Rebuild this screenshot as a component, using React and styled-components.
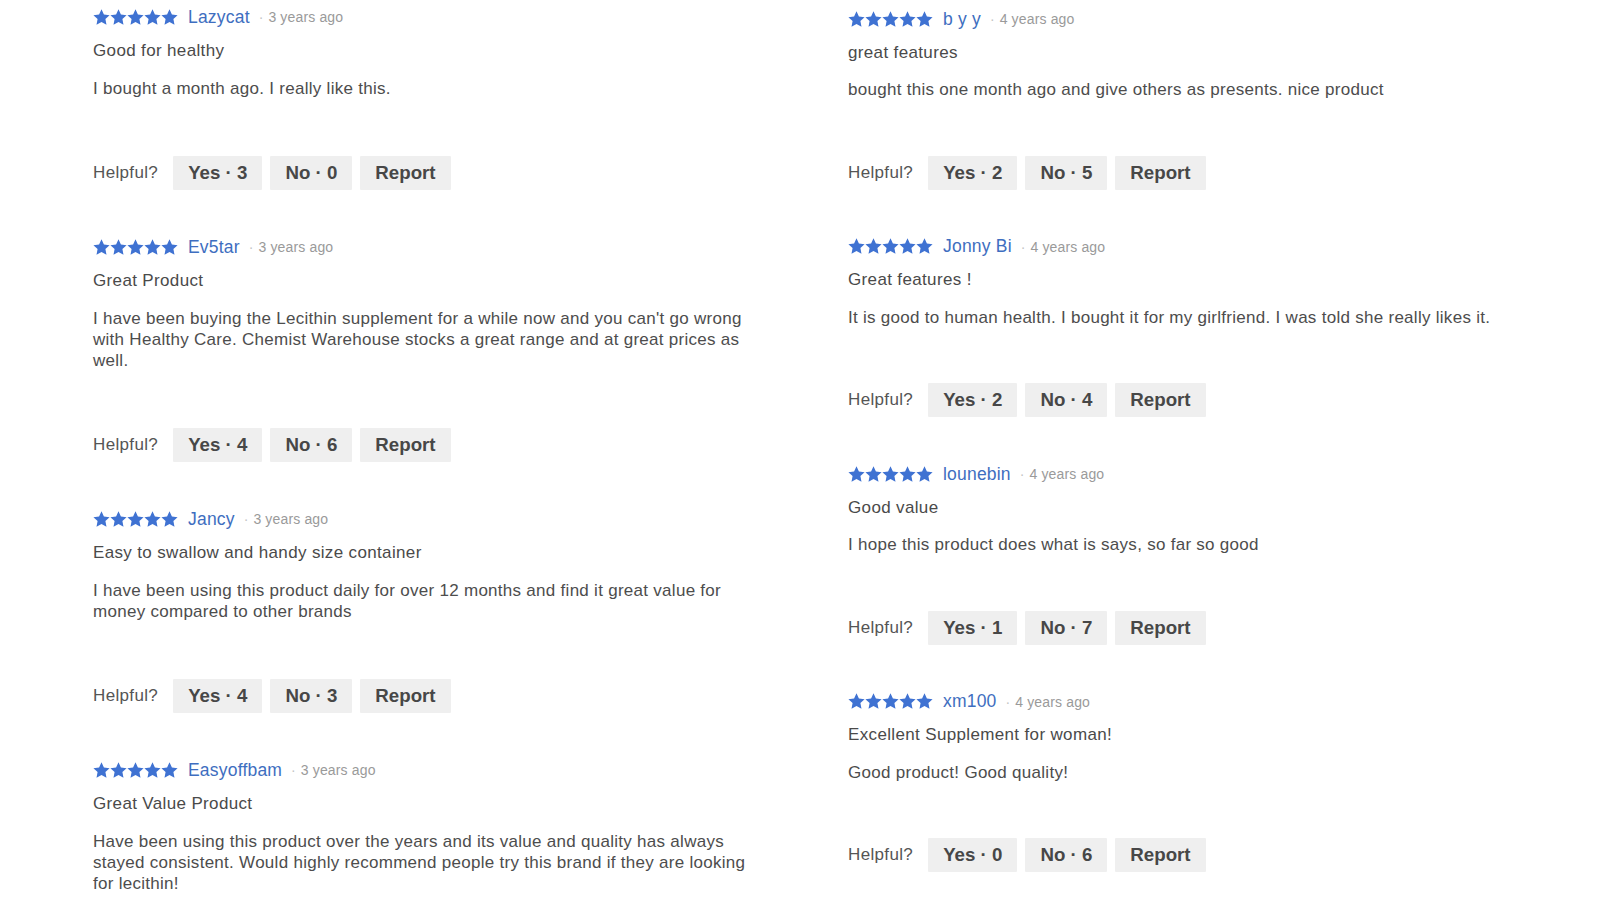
import React from "react";
import styled, { createGlobalStyle } from "styled-components";

const Global = createGlobalStyle`
  html, body { margin: 0; padding: 0; background: #ffffff; }
  body { font-family: "Liberation Sans", Arial, sans-serif; color: #444; }
`;

const Page = styled.div`
  display: grid;
  grid-template-columns: 667px 680px;
  column-gap: 88px;
  padding-left: 93px;
  width: 1600px;
  height: 900px;
  box-sizing: border-box;
  overflow: hidden;
`;

const Column = styled.div`
  display: flex;
  flex-direction: column;
  gap: ${(p) => p.$gap}px;
  padding-top: ${(p) => p.$top}px;
`;

const Review = styled.article`
  display: flex;
  flex-direction: column;
`;

const Header = styled.div`
  display: flex;
  align-items: center;
  height: 20px;
`;

const Stars = styled.div`
  display: flex;
  margin-right: 10px;
`;

const Name = styled.span`
  font-size: 17.5px;
  color: #3e6ec0;
  letter-spacing: 0.2px;
`;

const Dot = styled.span`
  color: #c4c4c4;
  font-size: 14px;
  margin: 0 5px 0 9px;
`;

const Age = styled.span`
  font-size: 14px;
  color: #9a9a9a;
  letter-spacing: 0.15px;
`;

const Title = styled.h3`
  margin: ${(p) => p.$mt}px 0 0;
  font-size: 17px;
  line-height: 20px;
  font-weight: 400;
  color: #4a4a4a;
  letter-spacing: 0.35px;
`;

const Body = styled.p`
  margin: 16.5px 0 0;
  font-size: 17px;
  line-height: 21px;
  color: #4d4d4d;
  letter-spacing: 0.28px;
`;

const Helpful = styled.div`
  display: flex;
  align-items: center;
  margin-top: ${(p) => p.$mt}px;
  height: 34px;
`;

const HelpfulLabel = styled.span`
  font-size: 17px;
  color: #555;
  margin-right: 15px;
  letter-spacing: 0.35px;
`;

const Buttons = styled.div`
  display: flex;
  gap: 8px;
`;

const Btn = styled.button`
  height: 34px;
  padding: 0 15px;
  border: none;
  border-radius: 1px;
  background: #efefef;
  font-family: "Liberation Sans", Arial, sans-serif;
  font-weight: 700;
  font-size: 18.7px;
  color: #474747;
  cursor: pointer;
`;

const Star = () => (
  <svg width="17" height="16.3" viewBox="0 0 24 23">
    <path
      d="M12 0.5L15.41 7.81L23.41 8.79L17.52 14.29L19.05 22.21L12 18.3L4.95 22.21L6.48 14.29L0.59 8.79L8.59 7.81Z"
      fill="#3f72d2"
    />
  </svg>
);

const left = [
  {
    name: "Lazycat",
    age: "3 years ago",
    title: "Good for healthy",
    body: "I bought a month ago. I really like this.",
    yes: 3,
    no: 0,
  },
  {
    name: "Ev5tar",
    age: "3 years ago",
    title: "Great Product",
    body: "I have been buying the Lecithin supplement for a while now and you can't go wrong with Healthy Care. Chemist Warehouse stocks a great range and at great prices as well.",
    yes: 4,
    no: 6,
  },
  {
    name: "Jancy",
    age: "3 years ago",
    title: "Easy to swallow and handy size container",
    body: "I have been using this product daily for over 12 months and find it great value for money compared to other brands",
    yes: 4,
    no: 3,
  },
  {
    name: "Easyoffbam",
    age: "3 years ago",
    title: "Great Value Product",
    body: "Have been using this product over the years and its value and quality has always stayed consistent. Would highly recommend people try this brand if they are looking for lecithin!",
    yes: 0,
    no: 0,
  },
];

const right = [
  {
    name: "b y y",
    age: "4 years ago",
    title: "great features",
    body: "bought this one month ago and give others as presents. nice product",
    yes: 2,
    no: 5,
  },
  {
    name: "Jonny Bi",
    age: "4 years ago",
    title: "Great features !",
    body: "It is good to human health. I bought it for my girlfriend. I was told she really likes it.",
    yes: 2,
    no: 4,
  },
  {
    name: "lounebin",
    age: "4 years ago",
    title: "Good value",
    body: "I hope this product does what is says, so far so good",
    yes: 1,
    no: 7,
  },
  {
    name: "xm100",
    age: "4 years ago",
    title: "Excellent Supplement for woman!",
    body: "Good product! Good quality!",
    yes: 0,
    no: 6,
  },
];

const ReviewItem = ({ r, titleGap, helpGap }) => (
  <Review>
    <Header>
      <Stars>
        {[0, 1, 2, 3, 4].map((i) => (
          <Star key={i} />
        ))}
      </Stars>
      <Name>{r.name}</Name>
      <Dot>·</Dot>
      <Age>{r.age}</Age>
    </Header>
    <Title $mt={titleGap}>{r.title}</Title>
    <Body>{r.body}</Body>
    <Helpful $mt={helpGap}>
      <HelpfulLabel>Helpful?</HelpfulLabel>
      <Buttons>
        <Btn>Yes · {r.yes}</Btn>
        <Btn>No · {r.no}</Btn>
        <Btn>Report</Btn>
      </Buttons>
    </Helpful>
  </Review>
);

export default function App() {
  return (
    <>
      <Global />
      <Page>
        <Column $top={7} $gap={47.5}>
          {left.map((r) => (
            <ReviewItem key={r.name} r={r} titleGap={14} helpGap={57} />
          ))}
        </Column>
        <Column $top={9} $gap={47}>
          {right.map((r) => (
            <ReviewItem key={r.name} r={r} titleGap={13.5} helpGap={55.5} />
          ))}
        </Column>
      </Page>
    </>
  );
}
